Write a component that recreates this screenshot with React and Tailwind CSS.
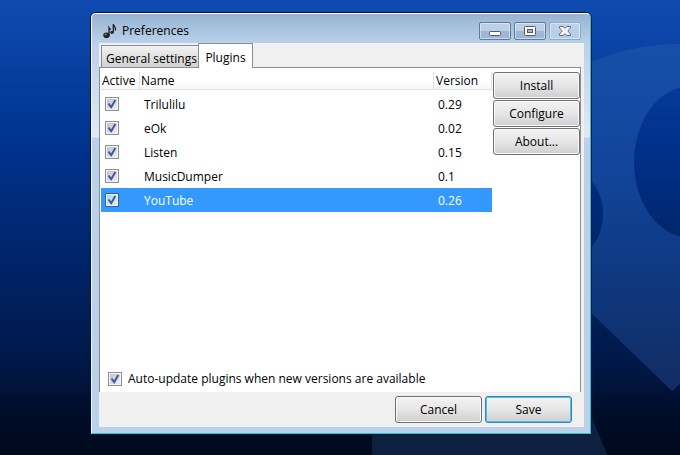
import { useState } from "react";

const initialPlugins = [
  { name: "Trilulilu", version: "0.29" },
  { name: "eOk", version: "0.02" },
  { name: "Listen", version: "0.15" },
  { name: "MusicDumper", version: "0.1" },
  { name: "YouTube", version: "0.26" },
];

function Backdrop() {
  return (
    <svg
      className="absolute inset-0 h-full w-full"
      viewBox="0 0 680 455"
      preserveAspectRatio="xMaxYMin slice"
      aria-hidden="true"
    >
      <defs>
        <linearGradient id="shape" x1="0" y1="44" x2="0" y2="455" gradientUnits="userSpaceOnUse">
          <stop offset="0" stopColor="#174fa8" />
          <stop offset="0.3" stopColor="#11459b" />
          <stop offset="0.6" stopColor="#0f367c" />
          <stop offset="0.85" stopColor="#122c62" />
          <stop offset="1" stopColor="#0e2040" />
        </linearGradient>
        <linearGradient id="eye" x1="0" y1="88" x2="0" y2="250" gradientUnits="userSpaceOnUse">
          <stop offset="0" stopColor="#043a9a" />
          <stop offset="0.4" stopColor="#003088" />
          <stop offset="1" stopColor="#002468" />
        </linearGradient>
      </defs>
      <path d="M560 78C600 54 640 44 680 44V384L672 391L560 283Z" fill="url(#shape)" />
      <ellipse cx="691" cy="162" rx="57" ry="76" fill="url(#eye)" />
      <ellipse cx="574" cy="214" rx="29" ry="41" fill="url(#eye)" />
      <path d="M372 455V425H595L607 455Z" fill="#0e2040" />
      <path d="M592 418L607 455H592Z" fill="#0e2040" />
    </svg>
  );
}

function NoteIcon() {
  return (
    <svg className="h-4 w-4" viewBox="0 0 16 16" aria-hidden="true">
      <ellipse cx="4.500" cy="12.300" rx="3.200" ry="2.800" fill="#222" />
      <circle cx="3.700" cy="11.500" r="1" fill="#888" />
      <path d="M7 12V4.500L8.600 7" fill="none" stroke="#222" strokeWidth="1.300" />
      <ellipse cx="10" cy="9.300" rx="1.900" ry="1.600" fill="#333" />
      <path
        d="M11.300 9.500V1C11.500 3 14 3.500 13.500 7.500"
        fill="none"
        stroke="#222"
        strokeWidth="1.300"
      />
    </svg>
  );
}

function CaptionButton({ label, dim, children }) {
  return (
    <button
      type="button"
      aria-label={label}
      className={
        "flex h-[18px] w-8 items-center justify-center rounded-[2px] border shadow-[inset_0_0_0_1px_rgba(255,255,255,0.45)] " +
        (dim
          ? "border-[#8fabc9] bg-linear-to-b from-[#bfd3ea] to-[#b3cce8]"
          : "border-[#64799a] bg-linear-to-b from-[#bccfe4] from-50% to-[#9db8d6] to-50%")
      }
    >
      {children}
    </button>
  );
}

function CheckBox({ id, label, checked, onChange, selected }) {
  return (
    <span className="grid h-[14px] w-[14px] shrink-0">
      <input
        id={id}
        type="checkbox"
        aria-label={label}
        checked={checked}
        onChange={onChange}
        className={
          "peer col-start-1 row-start-1 h-[14px] w-[14px] appearance-none border shadow-[inset_0_0_0_1px_#f4f4f4] " +
          (selected
            ? "border-[#34628f] bg-linear-to-br from-[#a5d4ee] to-[#e3f4fc]"
            : "border-[#8e8f8f] bg-linear-to-br from-[#b9bfca] to-[#f3f3f5]")
        }
      />
      <svg
        className="pointer-events-none invisible col-start-1 row-start-1 h-[14px] w-[14px] peer-checked:visible"
        viewBox="0 0 14 14"
        aria-hidden="true"
      >
        <path d="M3.500 6.500L6.200 10.200L10.300 3" fill="none" stroke="#40589f" strokeWidth="2" />
      </svg>
    </span>
  );
}

function PushButton({ primary, children }) {
  return (
    <button
      type="button"
      className={
        "h-[27px] w-[87px] rounded-[3px] border bg-linear-to-b from-[#f3f3f3] via-[#e6e6e6] to-[#cfcfcf] pt-px text-center " +
        (primary
          ? "border-[#3c7fb1] shadow-[inset_0_0_0_1px_#46c6ee]"
          : "border-[#707070] shadow-[inset_0_0_0_1px_#fafafa]")
      }
    >
      {children}
    </button>
  );
}

export default function App() {
  const [active, setActive] = useState(initialPlugins.map(() => true));
  const [selected, setSelected] = useState(4);
  const [autoUpdate, setAutoUpdate] = useState(true);

  const toggle = (index) => setActive(active.map((on, i) => (i === index ? !on : on)));

  return (
    <main className="relative flex min-h-screen flex-col overflow-hidden bg-[linear-gradient(to_bottom,#104bb0,#003592_29%,#002b7c_44%,#001f5c_66%,#001848_80%,#000c26_92%,#000a1c)] pt-3 pr-[88px] pb-5 pl-[90px] font-['Open_Sans','Noto_Sans',sans-serif] text-[12px] leading-4 text-black">
      <Backdrop />
      <section
        aria-label="Preferences"
        className="relative flex flex-1 flex-col rounded-t-[6px] border border-[#0b1426] bg-[#b9d1ea]"
      >
        <div className="flex flex-1 flex-col rounded-t-[5px] border border-t-white border-r-[#2fc0d8] border-b-[#2fc0d8] border-l-[#eef5fb] bg-[linear-gradient(to_bottom,#98b4d2,#b9d1ea_29px,#dfeaf6_123px,#b9d1ea_124px)] pr-[6px] pb-[6px] pl-[7px]">
          <header className="flex h-[29px] items-center gap-1 pt-1 pl-[3px]">
            <NoteIcon />
            <h1 className="flex-1">Preferences</h1>
            <div className="flex gap-[3px] pr-[3px]">
              <CaptionButton label="Minimize">
                <svg className="h-3 w-3" viewBox="0 0 12 12" aria-hidden="true">
                  <rect x="0.500" y="6.500" width="11" height="4" rx="1" fill="#fff" stroke="#535a68" />
                </svg>
              </CaptionButton>
              <CaptionButton label="Maximize">
                <svg className="h-3 w-3" viewBox="0 0 12 12" aria-hidden="true">
                  <rect x="0.500" y="1.500" width="11" height="9" rx="1" fill="#fff" stroke="#535a68" />
                  <rect x="3.500" y="4.500" width="5" height="3" fill="#9db8d6" stroke="#535a68" />
                </svg>
              </CaptionButton>
              <CaptionButton label="Close" dim>
                <svg className="h-3 w-3" viewBox="0 0 12 12" aria-hidden="true">
                  <path
                    d="M0.500 1.500H4L6 3.300L8 1.500H11.500V3L8.800 6L11.500 9V10.500H8L6 8.700L4 10.500H0.500V9L3.200 6L0.500 3Z"
                    fill="#f4f6f9"
                    stroke="#686f7c"
                  />
                </svg>
              </CaptionButton>
            </div>
          </header>

          <div className="flex flex-1 flex-col bg-[#f0f0f0]">
            <div role="tablist" className="flex h-[25px] items-end">
              <span className="h-px w-[2px] bg-[#898c95]" />
              <button
                type="button"
                role="tab"
                aria-selected="false"
                className="h-[23px] w-[97px] border border-r-0 border-[#898c95] bg-linear-to-b from-[#f2f2f2] to-[#d2d2d2] pt-1 pl-[3px] text-center whitespace-nowrap"
              >
                General settings
              </button>
              <button
                type="button"
                role="tab"
                aria-selected="true"
                className="h-[25px] w-[55px] border border-b-0 border-[#898c95] bg-white pt-1 text-center"
              >
                Plugins
              </button>
              <span className="h-px flex-1 bg-[#898c95]" />
              <span className="w-[3px]" />
            </div>

            <div
              role="tabpanel"
              aria-label="Plugins"
              className="mr-[3px] flex flex-1 flex-col border-x border-[#898c95] bg-white pt-1 pb-[5px]"
            >
              <div className="flex flex-1 items-start gap-px pl-px">
                <table className="flex-1 table-fixed border-separate border-spacing-0 text-left">
                  <colgroup>
                    <col className="w-[39px]" />
                    <col />
                    <col className="w-[58px]" />
                  </colgroup>
                  <thead>
                    <tr className="h-[18px] bg-linear-to-b from-white from-50% to-[#f4f5f7]">
                      <th className="border-r border-b border-[#dfe0e3] p-0 pt-px pl-px font-normal">Active</th>
                      <th className="border-r border-b border-[#dfe0e3] p-0 pt-px pl-px font-normal">Name</th>
                      <th className="border-r border-b border-[#dfe0e3] p-0 pt-px pl-[2px] font-normal">Version</th>
                    </tr>
                  </thead>
                  <tbody className="before:block before:h-[2px]">
                    {initialPlugins.map((plugin, index) => (
                      <tr
                        key={plugin.name}
                        onClick={() => setSelected(index)}
                        className={"h-6 " + (index === selected ? "bg-[#3399ff] text-white" : "")}
                      >
                        <td className="p-0 pl-1">
                          <CheckBox
                            label={"Active: " + plugin.name}
                            checked={active[index]}
                            onChange={() => toggle(index)}
                            selected={index === selected}
                          />
                        </td>
                        <td className="p-0 pt-px pl-1">{plugin.name}</td>
                        <td className="p-0 pt-px pl-1">{plugin.version}</td>
                      </tr>
                    ))}
                  </tbody>
                </table>
                <div className="flex w-[87px] flex-col gap-px">
                  <PushButton>Install</PushButton>
                  <PushButton>Configure</PushButton>
                  <PushButton>About...</PushButton>
                </div>
              </div>
              <div className="flex items-center gap-[6px] pl-2">
                <CheckBox
                  id="auto-update"
                  checked={autoUpdate}
                  onChange={() => setAutoUpdate(!autoUpdate)}
                />
                <label htmlFor="auto-update">Auto-update plugins when new versions are available</label>
              </div>
            </div>

            <footer className="flex justify-end gap-[3px] pt-1 pr-3 pb-1">
              <PushButton>Cancel</PushButton>
              <PushButton primary>Save</PushButton>
            </footer>
          </div>
        </div>
      </section>
    </main>
  );
}
